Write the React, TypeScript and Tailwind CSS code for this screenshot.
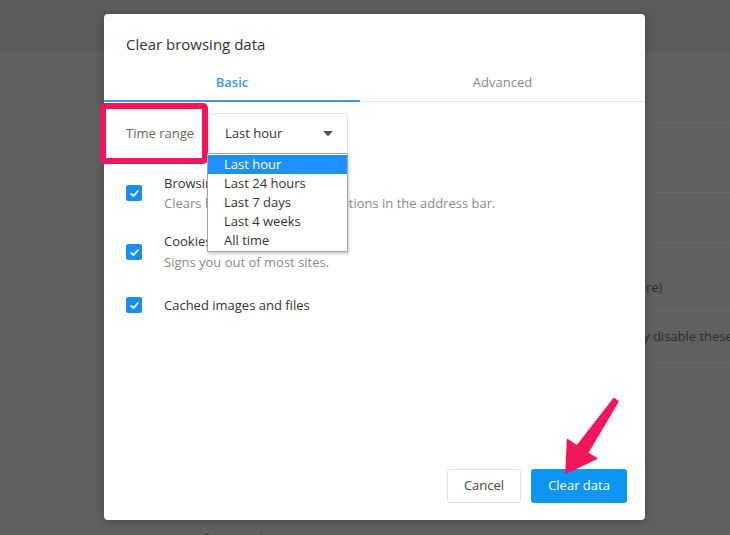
import React from "react";

const Check = () => (
  <span className="flex h-4 w-4 shrink-0 items-center justify-center rounded-[2px] bg-[#1a8ef2]">
    <svg width="11" height="11" viewBox="0 0 12 12" fill="none">
      <path d="M2.2 6.3l2.5 2.5 5-5.4" stroke="white" strokeWidth="1.8" strokeLinecap="round" strokeLinejoin="round" />
    </svg>
  </span>
);

const options = ["Last hour", "Last 24 hours", "Last 7 days", "Last 4 weeks", "All time"];

export default function App() {
  return (
    <div className="relative h-[535px] w-[730px] overflow-hidden bg-[#5f6060] font-['Open_Sans',sans-serif]">
      {/* dimmed settings page behind the dialog */}
      <div className="flex h-full flex-col">
        <div className="h-[52px] bg-[#5a5b5b]" />
        <div className="ml-[655px] h-[70px]" />
        <div className="ml-[655px] h-[70px] border-t border-[#686868]" />
        <div className="ml-[655px] h-[50px] border-t border-[#686868]" />
        <div className="ml-[655px] flex h-[68px] items-center border-t border-[#686868]" />
        <div className="ml-[655px] h-[52px] border-t border-[#686868]" />
        <div className="ml-[655px] flex-1 border-t border-[#686868]" />
        <div className="h-[8px] pl-[128px] pt-[3px] text-[14px] leading-[20px] text-[#2e2e2e]">Protect me from malicious sites</div>
      </div>
      <div className="absolute left-[646px] top-[277px] text-[13px] leading-[20px] text-[#2f2f2f]">re)</div>
      <div className="absolute left-[643px] top-[326px] whitespace-nowrap text-[13px] leading-[20px] text-[#2f2f2f]">y disable these</div>

      {/* dialog */}
      <div className="absolute left-[104px] top-[14px] flex h-[506px] w-[541px] flex-col rounded-[4px] bg-white shadow-[0_2px_8px_rgba(0,0,0,0.25)]">
        <div className="px-[22px] pt-[20px] text-[15px] leading-[20px] text-[#333]">Clear browsing data</div>

        <div className="mt-[8px] flex h-[40px] text-[13px]">
          <div className="flex w-[256px] items-center justify-center border-b-2 border-[#3c98e8] pt-[4px] font-semibold text-[#3c98e8]">Basic</div>
          <div className="flex flex-1 items-center justify-center border-b border-[#e6e6e6] pt-[3px] text-[#8a8a8a]">Advanced</div>
        </div>

        <div className="mt-[11px] flex items-center px-[22px]">
          <span className="w-[82px] text-[13px] text-[#666]">Time range</span>
          <div className="flex h-[42px] w-[140px] items-center justify-between rounded-[3px] border border-[#e4e4e4] pl-[16px] pr-[14px] text-[13px] text-[#333]">
            <span>Last hour</span>
            <svg width="10" height="6" viewBox="0 0 10 6">
              <path d="M0 0h10L5 5.5z" fill="#555" />
            </svg>
          </div>
        </div>

        <div className="mt-[18px] flex items-center gap-[22px] px-[22px]">
          <Check />
          <div className="text-[13px] leading-[20px]">
            <div className="text-[#333]">Browsing history</div>
            <div className="text-[#8a8a8a]">Clears history and autocompletions in the address bar.</div>
          </div>
        </div>

        <div className="mt-[18px] flex items-center gap-[22px] px-[22px]">
          <Check />
          <div className="text-[13px] leading-[21px]">
            <div className="text-[#333]">Cookies and other site data</div>
            <div className="text-[#8a8a8a]">Signs you out of most sites.</div>
          </div>
        </div>

        <div className="mt-[22px] flex items-center gap-[22px] px-[22px]">
          <Check />
          <div className="text-[13px] leading-[20px] text-[#333]">Cached images and files</div>
        </div>

        <div className="mt-auto flex justify-end gap-[10px] pb-[17px] pr-[18px]">
          <button className="h-[34px] w-[74px] rounded-[3px] border border-[#e2e2e2] bg-white text-[13px] text-[#444]">Cancel</button>
          <button className="h-[34px] w-[96px] rounded-[3px] bg-[#0d95f4] text-[13px] text-white">Clear data</button>
        </div>

        {/* highlight box */}
        <div className="absolute left-[-4px] top-[89px] h-[61px] w-[108px] rounded-[5px] border-[6px] border-[#f3155b]" />

        {/* open dropdown */}
        <div className="absolute left-[103px] top-[139px] w-[141px] border border-[#a3a3a3] bg-white py-px text-[13px] leading-[19px] text-[#333] shadow-[1px_2px_3px_rgba(0,0,0,0.2)]">
          {options.map((o, i) => (
            <div key={o} className={i === 0 ? "bg-[#1e90ff] pl-[16px] text-white" : "pl-[16px]"}>
              {o}
            </div>
          ))}
        </div>
      </div>

      {/* pink arrow */}
      <svg className="pointer-events-none absolute left-0 top-0" width="730" height="535" viewBox="0 0 730 535">
        <polygon
          points="614,398.5 577,446 567.5,439.5 566,473 596.5,458.5 587.5,453 618,401.5"
          fill="#f2175c"
          stroke="#f2175c"
          strokeWidth="1.5"
          strokeLinejoin="round"
        />
      </svg>
    </div>
  );
}
